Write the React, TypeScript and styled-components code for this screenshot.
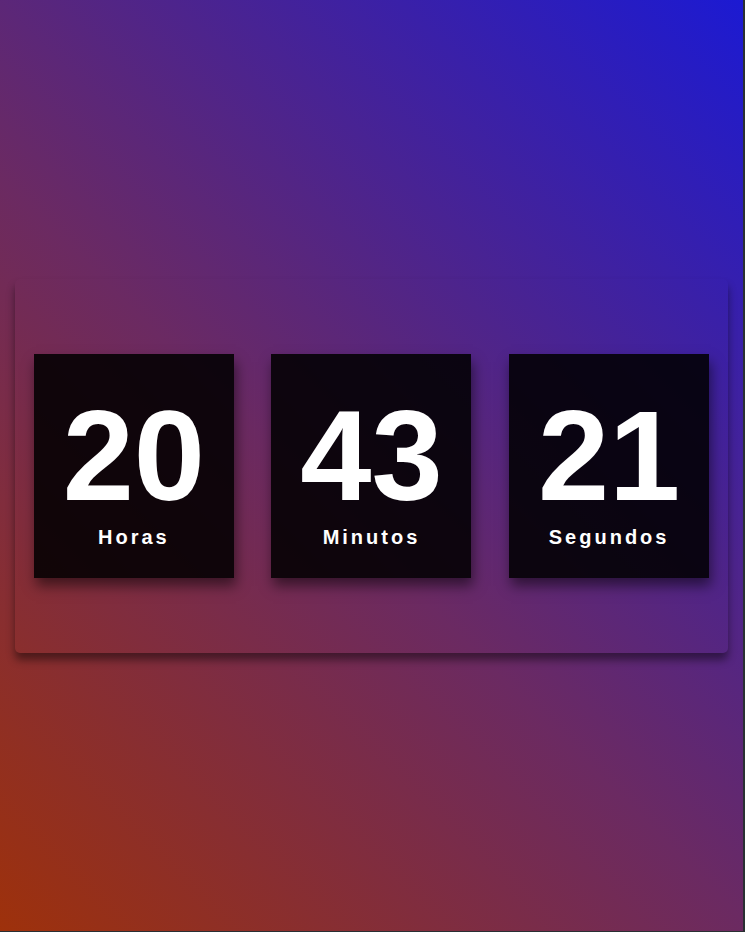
import React from "react";
import styled, { createGlobalStyle } from "styled-components";

const GlobalStyle = createGlobalStyle`
  html {
    margin: 0;
    padding: 0;
    background: #2a2f33;
  }
  body {
    margin: 0;
    padding: 0;
    width: calc(100vw - 2px);
    height: calc(100vh - 1px);
    overflow: hidden;
    background: linear-gradient(45deg, #9e310b 0%, #6b2a62 45%, #1c1ad2 100%);
    font-family: "Liberation Sans", Arial, Helvetica, sans-serif;
  }
  #root {
    height: 100%;
  }
`;

const Page = styled.main`
  height: 100%;
  display: flex;
  align-items: center;
  justify-content: center;
`;

const Panel = styled.section`
  width: 96%;
  box-sizing: border-box;
  padding: 75px 19px;
  display: flex;
  justify-content: space-between;
  border-radius: 5px;
  box-shadow: 0 7px 9px rgba(0, 0, 0, 0.45);
`;

const Card = styled.div`
  width: 200px;
  height: 224px;
  box-sizing: border-box;
  padding-top: 38px;
  display: flex;
  flex-direction: column;
  align-items: center;
  background: rgba(0, 0, 0, 0.87);
  box-shadow: 2px 8px 12px rgba(0, 0, 0, 0.5);
  color: #ffffff;
`;

const Value = styled.div`
  font-size: 128px;
  font-weight: 700;
  line-height: 128px;
`;

const Label = styled.div`
  margin-top: 6px;
  font-size: 20px;
  font-weight: 700;
  line-height: 23px;
  letter-spacing: 3px;
`;

const units = [
  { value: "20", label: "Horas" },
  { value: "43", label: "Minutos" },
  { value: "21", label: "Segundos" },
];

export default function App() {
  return (
    <>
      <GlobalStyle />
      <Page>
        <Panel>
          {units.map((u) => (
            <Card key={u.label}>
              <Value>{u.value}</Value>
              <Label>{u.label}</Label>
            </Card>
          ))}
        </Panel>
      </Page>
    </>
  );
}
